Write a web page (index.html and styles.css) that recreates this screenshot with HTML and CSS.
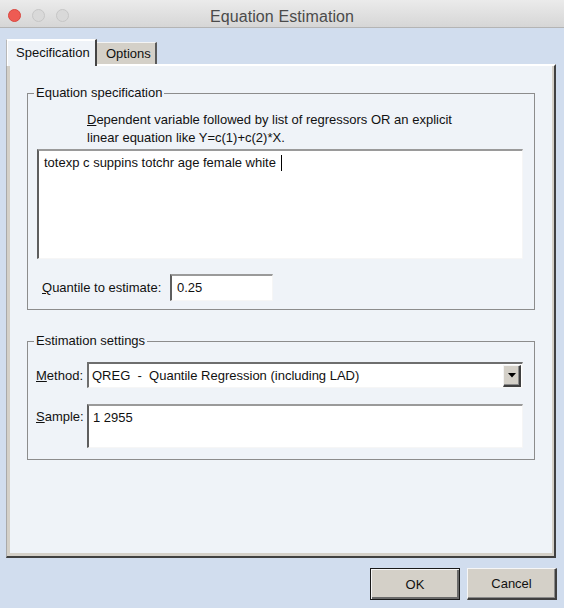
FILE: index.html
```html
<!DOCTYPE html>
<html>
<head>
<meta charset="utf-8">
<title>Equation Estimation</title>
<link rel="stylesheet" href="styles.css">
</head>
<body>
<div class="window">
  <header class="titlebar">
    <div class="lights">
      <span class="light red"></span>
      <span class="light"></span>
      <span class="light"></span>
    </div>
    <div class="title">Equation Estimation</div>
    <div class="spacer"></div>
  </header>
  <main class="content">
    <div class="tabs">
      <div class="tab active">Specification</div>
      <div class="tab">Options</div>
    </div>
    <div class="panel">
      <fieldset class="group group-eq">
        <legend>Equation specification</legend>
        <p class="hint"><u>D</u>ependent variable followed by list of regressors OR an explicit<br>linear equation like Y=c(1)+c(2)*X.</p>
        <div class="textbox eq-box">totexp c suppins totchr age female white <span class="caret"></span></div>
        <div class="row quantile-row">
          <label class="lbl quantile-lbl"><u>Q</u>uantile to estimate:</label>
          <div class="textbox quantile-box">0.25</div>
        </div>
      </fieldset>
      <fieldset class="group group-est">
        <legend>Estimation settings</legend>
        <div class="row method-row">
          <label class="lbl short-lbl"><u>M</u>ethod:</label>
          <div class="select">
            <span class="select-text">QREG&nbsp; -&nbsp; Quantile Regression (including LAD)</span>
            <span class="drop">
              <svg width="8" height="5" viewBox="0 0 8 5"><polygon points="0,0 8,0 4,4.5" fill="#000"/></svg>
            </span>
          </div>
        </div>
        <div class="row sample-row">
          <label class="lbl short-lbl sample-lbl"><u>S</u>ample:</label>
          <div class="textbox sample-box">1 2955</div>
        </div>
      </fieldset>
    </div>
    <div class="buttons">
      <button class="btn default">OK</button>
      <button class="btn">Cancel</button>
    </div>
  </main>
</div>
</body>
</html>
```

FILE: styles.css
```css
* { box-sizing: border-box; }

html, body {
  margin: 0;
  padding: 0;
}

body {
  width: 564px;
  height: 608px;
  overflow: hidden;
  background: #d1ddee;
  font-family: "Liberation Sans", Arial, sans-serif;
  font-size: 13px;
  color: #111;
}

.window {
  width: 564px;
  height: 608px;
}

/* Title bar */
.titlebar {
  height: 28px;
  display: grid;
  grid-template-columns: 1fr auto 1fr;
  align-items: center;
  background: linear-gradient(#ebebeb, #d6d6d6);
  border-bottom: 1px solid #b4b4b4;
}

.lights {
  display: flex;
  gap: 11px;
  padding-left: 8px;
  padding-top: 3px;
}

.light {
  width: 13px;
  height: 13px;
  border-radius: 50%;
  background: #d9d9d9;
  border: 1px solid #c6c6c6;
}

.light.red {
  background: #ee5b53;
  border-color: #d9473f;
}

.title {
  font-size: 16px;
  color: #4b4b4b;
  letter-spacing: 0.1px;
  padding-top: 6px;
}

/* Content */
.content {
  padding: 11px 7px 0 6px;
}

.tabs {
  display: flex;
  align-items: flex-end;
  height: 27px;
  position: relative;
  z-index: 1;
  margin-bottom: -2px;
}

.tab {
  height: 22px;
  width: 60px;
  padding-left: 9px;
  line-height: 21px;
  background: #d4d0c8;
  border-top: 1px solid #f4f4f4;
  border-right: 2px solid #5a5a5a;
  color: #111;
  margin-bottom: 2px;
}

.tab.active {
  width: 91px;
  height: 27px;
  padding-left: 9px;
  line-height: 25px;
  background: #eff3f8;
  border-left: 1px solid #b8b8b8;
  border-top: 1px solid #ffffff;
  border-right: 2px solid #444;
  box-shadow: inset 1px 1px 0 #ffffff;
  margin-bottom: 0;
}

.panel {
  width: 550px;
  height: 494px;
  background: #eff3f8;
  border-style: solid;
  border-width: 2px 2px 2px 1px;
  border-color: #ffffff #404040 #404040 #a9a9a9;
  box-shadow: inset 3px 0 0 #d4d0c8, inset -2px -3px 0 #d4d0c8;
  padding: 19px 19px 0 20px;
}

/* Group boxes */
.group {
  margin: 0;
  padding: 0;
  min-width: 0;
  border: 1px solid #8c8c8c;
}

.group legend {
  margin-left: 6px;
  padding: 0 2px;
  line-height: 16px;
}

.group-eq {
  padding-bottom: 8px;
}

.group-est {
  margin-top: 23px;
  padding-bottom: 11px;
}

.hint {
  margin: 10px 0 0 59px;
  line-height: 18px;
}

.textbox {
  background: #ffffff;
  border-style: solid;
  border-width: 2px 1px 1px 2px;
  border-color: #9a9a9a #f6f6f6 #f6f6f6 #5e5e5e;
  padding: 3px 5px;
  line-height: 16px;
}

.eq-box {
  margin: 2px 0 0 9px;
  width: 486px;
  height: 110px;
  padding-top: 4px;
}

.caret {
  display: inline-block;
  width: 1px;
  height: 16px;
  background: #000;
  vertical-align: -4px;
  margin-left: 1px;
}

.row {
  display: flex;
  align-items: center;
}

.lbl {
  flex: none;
}

.quantile-row {
  margin: 15px 0 0 14px;
}

.quantile-lbl {
  width: 128px;
}

.quantile-box {
  width: 103px;
  height: 27px;
  padding: 4px 5px;
}

.short-lbl {
  width: 51px;
}

.method-row {
  margin: 13px 0 0 8px;
}

.select {
  width: 436px;
  height: 26px;
  display: flex;
  align-items: center;
  justify-content: space-between;
  background: #ffffff;
  border-style: solid;
  border-width: 2px 1px 1px 2px;
  border-color: #6e6e6e #f6f6f6 #f6f6f6 #6e6e6e;
  padding: 0 1px 0 3px;
}

.drop {
  width: 18px;
  height: 22px;
  display: flex;
  align-items: center;
  justify-content: center;
  background: #d4d0c8;
  border-style: solid;
  border-width: 1px 2px 2px 1px;
  border-color: #f4f4f4 #404040 #404040 #f4f4f4;
  box-shadow: inset -1px -1px 0 #8a8a8a;
}

.sample-row {
  margin: 16px 0 0 8px;
  align-items: flex-start;
}

.sample-lbl {
  padding-top: 5px;
}

.sample-box {
  width: 436px;
  height: 44px;
  padding: 4px 4px;
}

/* Buttons */
.buttons {
  display: flex;
  justify-content: flex-end;
  gap: 7px;
  margin-top: 10px;
}

.btn {
  width: 90px;
  height: 32px;
  font-family: "Liberation Sans", Arial, sans-serif;
  font-size: 13px;
  color: #111;
  background: #d4d0c8;
  border-style: solid;
  border-width: 1px 2px 2px 1px;
  border-color: #f6f6f6 #404040 #404040 #f6f6f6;
  box-shadow: inset -1px -1px 0 #8a8a8a;
  padding: 0;
}

.btn.default {
  border: 1px solid #1a1a1a;
  box-shadow: inset 1px 1px 0 #f6f6f6, inset -2px -2px 0 #6a6a6a;
}
```
